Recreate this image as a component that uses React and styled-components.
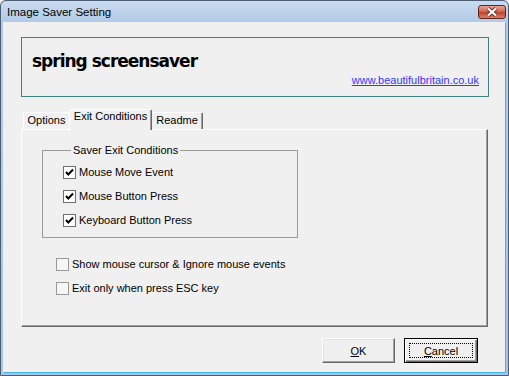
import React from "react";
import styled, { createGlobalStyle } from "styled-components";

const GlobalStyle = createGlobalStyle`
  html, body {
    margin: 0;
    padding: 0;
    background: #f0f0f0;
  }
  body {
    font-family: "Liberation Sans", Arial, sans-serif;
    font-size: 11px;
    color: #000;
  }
`;

const Window = styled.div`
  width: 509px;
  height: 376px;
  box-sizing: border-box;
  border: 1px solid #4b5e74;
  border-radius: 6px 6px 0 0;
  background: linear-gradient(#c9dbef, #b4cbe7 20px, #a9c4e4);
  padding: 0 3px 3px 2px;
  display: flex;
  flex-direction: column;
  overflow: hidden;
`;

const TitleBar = styled.div`
  height: 21px;
  display: flex;
  align-items: center;
  justify-content: space-between;
  padding: 0 0 0 4px;
  margin-right: -1px;
`;

const TitleText = styled.span`
  font-family: "Liberation Sans", Arial, sans-serif;
  font-size: 11.5px;
  color: #000;
`;

const CloseButton = styled.div`
  width: 28px;
  height: 14px;
  box-sizing: border-box;
  border: 1px solid #5e261c;
  border-radius: 3px;
  background: linear-gradient(#e8a595, #d26a55 45%, #c0432e 55%, #d9806b);
  display: flex;
  align-items: center;
  justify-content: center;
`;

const Client = styled.div`
  flex: 1;
  background: #f0f0f0;
  display: flex;
  flex-direction: column;
  box-shadow: 1px 1px 0 #3fb3e3;
`;

const Header = styled.div`
  margin: 15px 16px 0 18px;
  height: 60px;
  box-sizing: border-box;
  border: 1px solid #408080;
  padding: 13px 9px 0 10px;
  display: flex;
  flex-direction: column;
`;

const HeaderTitle = styled.div`
  font-family: "DejaVu Sans", Verdana, sans-serif;
  font-weight: bold;
  font-size: 17px;
  line-height: 20px;
  letter-spacing: -1px;
`;

const Link = styled.a`
  align-self: flex-end;
  margin-top: 3px;
  line-height: 13px;
  color: #3535ff;
  text-decoration: underline;
  cursor: pointer;
`;

const TabArea = styled.div`
  margin: 12px 0 0 18px;
  width: 467px;
`;

const TabList = styled.div`
  display: flex;
  align-items: flex-end;
  height: 20px;
  padding-left: 2px;
`;

const Tab = styled.div`
  width: ${(p) => p.$width}px;
  height: ${(p) => (p.$active ? 21 : 17)}px;
  margin-bottom: ${(p) => (p.$active ? -1 : 0)}px;
  box-sizing: border-box;
  border-top: 1px solid #fff;
  border-left: ${(p) => (p.$noLeft ? "none" : "1px solid #fff")};
  border-right: ${(p) => (p.$noRight ? "none" : "1px solid #696969")};
  box-shadow: ${(p) => (p.$noRight ? "none" : "inset -1px 0 0 #a0a0a0")};
  border-radius: 2px 2px 0 0;
  background: #f0f0f0;
  position: relative;
  z-index: ${(p) => (p.$active ? 1 : 0)};
  line-height: ${(p) => (p.$active ? 13 : 12)}px;
  padding-top: ${(p) => (p.$active ? 0 : 1)}px;
  text-align: center;
  white-space: nowrap;
`;

const Panel = styled.div`
  height: 198px;
  box-sizing: border-box;
  border: 1px solid;
  border-color: #fff #696969 #696969 #fff;
  box-shadow: inset -1px -1px 0 #a0a0a0;
  padding: 14px 0 0 20px;
`;

const GroupBox = styled.fieldset`
  width: 256px;
  box-sizing: border-box;
  margin: 0;
  padding: 3px 0 5px 20px;
  border: 1px solid #999;
  min-width: 0;
`;

const GroupLabel = styled.legend`
  padding: 0 2px;
  margin-left: 8px;
  line-height: 13px;
  font-size: 11px;
`;

const OptionList = styled.div`
  margin: 14px 0 0 14px;
`;

const CheckRow = styled.label`
  display: flex;
  align-items: center;
  gap: 3px;
  height: 24px;
  line-height: 13px;
`;

const Box = styled.span`
  width: 13px;
  height: 13px;
  box-sizing: border-box;
  border: 1px solid ${(p) => (p.$checked ? "#6f6f6f" : "#9a9a9a")};
  background: ${(p) => (p.$checked ? "#fff" : "#f6f6f6")};
  display: flex;
  align-items: center;
  justify-content: center;
  flex-shrink: 0;
`;

const ButtonRow = styled.div`
  display: flex;
  justify-content: flex-end;
  gap: 9px;
  margin: 11px 27px 0 0;
`;

const Button = styled.button`
  width: ${(p) => p.$width}px;
  height: 25px;
  box-sizing: border-box;
  padding: ${(p) => (p.$default ? "4px" : "0")};
  background: #f0f0f0;
  font-family: "Liberation Sans", Arial, sans-serif;
  font-size: 11px;
  color: #000;
  display: flex;
  align-items: stretch;
  justify-content: center;
  border: 1px solid;
  border-color: ${(p) =>
    p.$default ? "#000" : "#fff #696969 #696969 #fff"};
  box-shadow: ${(p) =>
    p.$default
      ? "inset 1px 1px 0 #fff, inset -1px -1px 0 #696969, inset -2px -2px 0 #a0a0a0"
      : "inset -1px -1px 0 #a0a0a0, inset 1px 1px 0 #e3e3e3"};
`;

const ButtonLabel = styled.span`
  flex: 1;
  display: flex;
  align-items: center;
  justify-content: center;
  border: 1px ${(p) => (p.$focus ? "dotted #000" : "solid transparent")};
`;

function CheckMark() {
  return (
    <svg width="9" height="9" viewBox="0 0 9 9">
      <polyline
        points="1,4 3.3,6.5 8,1.5"
        fill="none"
        stroke="#000"
        strokeWidth="2"
      />
    </svg>
  );
}

function CloseIcon() {
  return (
    <svg width="14" height="10" viewBox="0 0 14 10">
      <path d="M3 1.5 L11 8.5 M11 1.5 L3 8.5" stroke="#6a2c22" strokeWidth="4" />
      <path d="M3 1.5 L11 8.5 M11 1.5 L3 8.5" stroke="#fff" strokeWidth="2.2" />
    </svg>
  );
}

function Check({ checked, children }) {
  return (
    <CheckRow>
      <Box $checked={checked}>{checked && <CheckMark />}</Box>
      {children}
    </CheckRow>
  );
}

export default function App() {
  return (
    <>
      <GlobalStyle />
      <Window>
        <TitleBar>
          <TitleText>Image Saver Setting</TitleText>
          <CloseButton>
            <CloseIcon />
          </CloseButton>
        </TitleBar>
        <Client>
          <Header>
            <HeaderTitle>spring screensaver</HeaderTitle>
            <Link>www.beautifulbritain.co.uk</Link>
          </Header>
          <TabArea>
            <TabList>
              <Tab $width={46} $noRight>
                Options
              </Tab>
              <Tab $width={83} $active>
                Exit Conditions
              </Tab>
              <Tab $width={51} $noLeft>
                Readme
              </Tab>
            </TabList>
            <Panel>
              <GroupBox>
                <GroupLabel>Saver Exit Conditions</GroupLabel>
                <Check checked>Mouse Move Event</Check>
                <Check checked>Mouse Button Press</Check>
                <Check checked>Keyboard Button Press</Check>
              </GroupBox>
              <OptionList>
                <Check>Show mouse cursor &amp; Ignore mouse events</Check>
                <Check>Exit only when press ESC key</Check>
              </OptionList>
            </Panel>
          </TabArea>
          <ButtonRow>
            <Button $width={73}>
              <ButtonLabel>
                <span>
                  <u>O</u>K
                </span>
              </ButtonLabel>
            </Button>
            <Button $width={74} $default>
              <ButtonLabel $focus>
                <span>
                  <u>C</u>ancel
                </span>
              </ButtonLabel>
            </Button>
          </ButtonRow>
        </Client>
      </Window>
    </>
  );
}
